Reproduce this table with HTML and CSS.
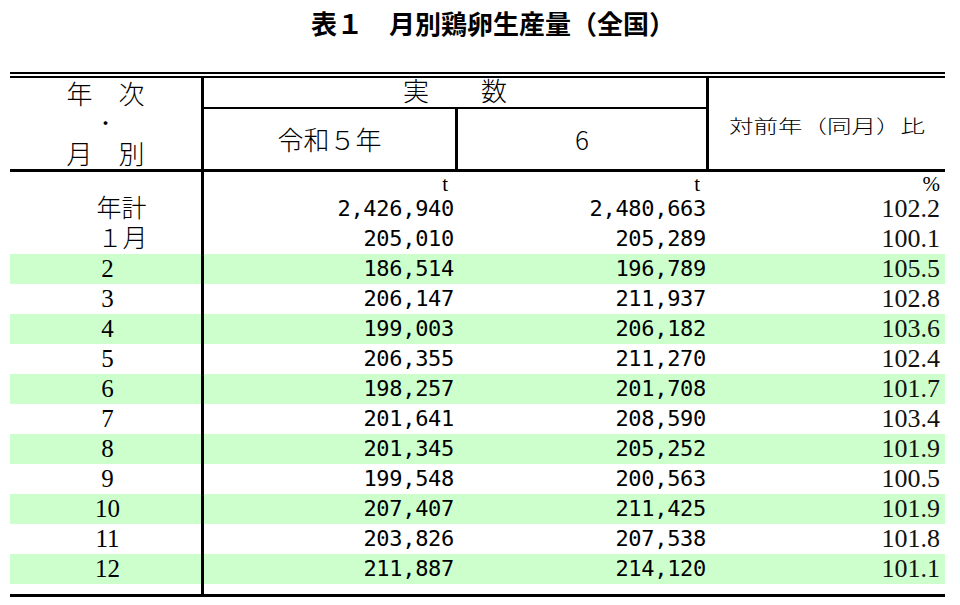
FILE: index.html
```html
<!DOCTYPE html>
<html lang="ja">
<head>
<meta charset="utf-8">
<title>表１ 月別鶏卵生産量（全国）</title>
<link rel="stylesheet" href="styles.css">
</head>
<body>
<div class="title">表１　月別鶏卵生産量（全国）</div>
<table class="egg">
  <colgroup><col class="w1"><col class="w2"><col class="w3"><col class="w4"></colgroup>
  <thead>
    <tr>
      <th class="h-year" rowspan="2"><div class="hl">年　次</div><div class="hl dot">・</div><div class="hl">月　別</div></th>
      <th class="h-jissu" colspan="2">実　　数</th>
      <th class="h-ratio" rowspan="2"><span class="sq">対前年（同月）比</span></th>
    </tr>
    <tr>
      <th class="h-sub">令和５年</th>
      <th class="h-sub h-num">6</th>
    </tr>
  </thead>
  <tbody>
    <tr class="unit"><td class="c1"></td><td class="u2">t</td><td class="u3">t</td><td class="u4">%</td></tr>
    <tr><td class="c1 lab">年計</td><td class="n">2,426,940</td><td class="n n3">2,480,663</td><td class="r">102.2</td></tr>
    <tr><td class="c1 lab lab2">１月</td><td class="n">205,010</td><td class="n n3">205,289</td><td class="r">100.1</td></tr>
    <tr class="g"><td class="c1">2</td><td class="n">186,514</td><td class="n n3">196,789</td><td class="r">105.5</td></tr>
    <tr><td class="c1">3</td><td class="n">206,147</td><td class="n n3">211,937</td><td class="r">102.8</td></tr>
    <tr class="g"><td class="c1">4</td><td class="n">199,003</td><td class="n n3">206,182</td><td class="r">103.6</td></tr>
    <tr><td class="c1">5</td><td class="n">206,355</td><td class="n n3">211,270</td><td class="r">102.4</td></tr>
    <tr class="g"><td class="c1">6</td><td class="n">198,257</td><td class="n n3">201,708</td><td class="r">101.7</td></tr>
    <tr><td class="c1">7</td><td class="n">201,641</td><td class="n n3">208,590</td><td class="r">103.4</td></tr>
    <tr class="g"><td class="c1">8</td><td class="n">201,345</td><td class="n n3">205,252</td><td class="r">101.9</td></tr>
    <tr><td class="c1">9</td><td class="n">199,548</td><td class="n n3">200,563</td><td class="r">100.5</td></tr>
    <tr class="g"><td class="c1">10</td><td class="n">207,407</td><td class="n n3">211,425</td><td class="r">101.9</td></tr>
    <tr><td class="c1">11</td><td class="n">203,826</td><td class="n n3">207,538</td><td class="r">101.8</td></tr>
    <tr class="g"><td class="c1">12</td><td class="n">211,887</td><td class="n n3">214,120</td><td class="r">101.1</td></tr>
    <tr class="end"><td class="c1"></td><td></td><td></td><td></td></tr>
  </tbody>
</table>
</body>
</html>
```
FILE: styles.css
```css
html, body {
  margin: 0;
  padding: 0;
  background: #fff;
  color: #000;
}
body {
  width: 960px;
  font-family: "Noto Sans CJK JP", sans-serif;
}
.title {
  height: 46px;
  line-height: 46px;
  margin-bottom: 26px;
  padding-left: 26px;
  text-align: center;
  font-size: 26px;
  font-weight: bold;
}
.egg {
  margin-left: 10px;
  width: 935px;
  table-layout: fixed;
  border-collapse: separate;
  border-spacing: 0;
  border-top: 6px double #000;
  border-bottom: 3px solid #000;
}
.w1 { width: 194px; }
.w2 { width: 254px; }
.w3 { width: 251px; }
.w4 { width: 236px; }

.egg th {
  padding: 0;
  font-weight: 300;
  font-size: 26px;
  text-align: center;
  font-family: "Noto Sans CJK JP", serif;
}
.h-year {
  border-right: 3px solid #000;
  border-bottom: 3px solid #000;
  padding-bottom: 1px !important;
  vertical-align: top;
}
.hl {
  line-height: 30px;
  height: 30px;
}
.hl.dot {
  font-size: 15px;
  font-weight: bold;
}
.h-jissu {
  border-right: 3px solid #000;
  border-bottom: 2px solid #000;
  line-height: 24px;
  padding-bottom: 5px !important;
  vertical-align: top;
}
.h-sub {
  border-right: 3px solid #000;
  border-bottom: 3px solid #000;
  line-height: 60px;
}
.h-num {
  font-family: "Liberation Serif", serif;
  font-weight: normal;
}
.h-ratio {
  border-bottom: 3px solid #000;
  vertical-align: middle;
}
.sq {
  display: inline-block;
  font-size: 24.5px;
  line-height: 30px;
  transform: scaleY(0.76);
}

.egg td {
  padding: 0;
  line-height: 30px;
  white-space: nowrap;
}
.c1 {
  border-right: 3px solid #000;
  text-align: center;
  padding-left: 4px !important;
  font-family: "Liberation Serif", "Noto Sans CJK JP", serif;
  font-size: 25px;
  font-weight: 300;
}
.lab {
  padding-left: 32px !important;
  font-size: 25px;
}
.lab2 {
  padding-left: 34px !important;
}
.n {
  text-align: right;
  padding-right: 4px !important;
  font-family: "DejaVu Sans Mono", monospace;
  font-size: 22px;
  letter-spacing: -0.3px;
}
.n3 {
  padding-right: 3px !important;
}
.r {
  text-align: right;
  padding-right: 5px !important;
  font-family: "Liberation Serif", serif;
  font-size: 26px;
  color: #111;
}
.unit td {
  line-height: 20px;
  padding-top: 2px;
  font-family: "Liberation Serif", serif;
  font-size: 21px;
  text-align: right;
}
.unit .u2 { padding-right: 10px; }
.unit .u3 { padding-right: 9px; }
.unit .u4 { padding-right: 5px; }
.g td {
  background: #ccffcc;
}
.end td {
  height: 10px;
  line-height: 0;
  font-size: 0;
}
```
